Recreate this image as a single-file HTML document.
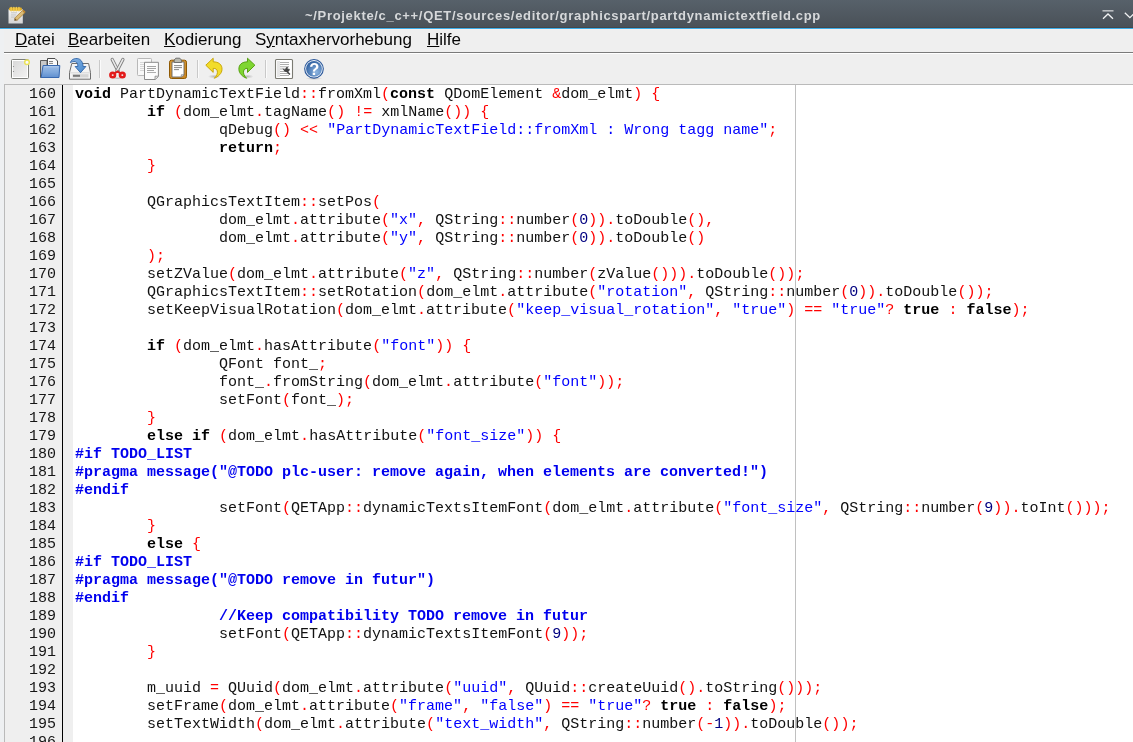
<!DOCTYPE html>
<html><head><meta charset="utf-8">
<style>
*{margin:0;padding:0;box-sizing:border-box}
body{will-change:transform}
html,body{width:1133px;height:742px;overflow:hidden;background:#efefef;font-family:"Liberation Sans",sans-serif}
#title{position:absolute;left:0;top:0;width:1133px;height:28px;background:linear-gradient(#57616a,#4a5158 96%,#45474b 96%);}
#title .t{position:absolute;left:305px;top:8px;font-weight:bold;font-size:13px;letter-spacing:0.68px;color:#d6d8da;white-space:nowrap}
#bl{position:absolute;left:0;top:28px;width:1133px;height:1px;background:#3daee9}
#bl2{position:absolute;left:0;top:29px;width:1133px;height:1px;background:#f6f1ef}
#menu{position:absolute;left:0;top:29px;width:1133px;height:24px;font-size:17px;color:#050505}
#menu span{position:absolute;top:1px;white-space:nowrap}
#menu u{text-decoration:underline;text-decoration-thickness:1px;text-underline-offset:1px}
#msep{position:absolute;left:4px;top:52px;width:1129px;height:1px;background:#7a7a7a}
#msep2{position:absolute;left:4px;top:53px;width:1129px;height:1px;background:#fff}
#tb{position:absolute;left:0;top:0;width:340px;height:84px}
#tb svg{position:absolute}
.sep{position:absolute;width:1px;height:22px;top:59px;background:#c8c8c8}
#ed{position:absolute;left:4px;top:84px;width:1129px;height:658px;border-left:1px solid #bababa;border-top:1px solid #bababa;background:#fff;overflow:hidden}
#gut{position:absolute;left:0;top:0;width:68px;height:100%;background:#efefef}
#gline{position:absolute;left:57px;top:0;width:1px;height:100%;background:#000}
#margin{position:absolute;left:790px;top:0;width:1px;height:100%;background:#c0c0c0;z-index:2}
pre{font-family:"Liberation Mono",monospace;font-size:15px;line-height:18px;tab-size:8;-moz-tab-size:8}
#nums{position:absolute;left:-1px;top:1px;width:52px;text-align:right;color:#151515}
#code{position:absolute;left:70px;top:1px;color:#111}
.k{font-weight:bold;color:#000}
.o{color:#ff0000}
.s{color:#0000ff}
.n{color:#000080}
.p{font-weight:bold;color:#0000ee}
.c{font-weight:bold;color:#0000ee}
</style></head><body>
<div id="title"><svg width="1133" height="28" viewBox="0 0 1133 28" style="position:absolute;left:0;top:0">
<defs>
<linearGradient id="gpap" x1="0" y1="0" x2="0" y2="1"><stop offset="0" stop-color="#f4f4f4"/><stop offset="1" stop-color="#d4d4d4"/></linearGradient>
<linearGradient id="gpen" x1="0" y1="0" x2="1" y2="0"><stop offset="0" stop-color="#a87a2a"/><stop offset="0.5" stop-color="#e8cc8a"/><stop offset="1" stop-color="#b08030"/></linearGradient>
</defs>
<rect x="8.5" y="9.3" width="14.3" height="14.2" fill="url(#gpap)"/>
<rect x="11" y="12.5" width="6" height="0.7" fill="#b8b8b8"/><rect x="11" y="14.6" width="5" height="0.7" fill="#b8b8b8"/><rect x="11" y="16.7" width="4" height="0.7" fill="#b8b8b8"/>
<rect x="9" y="7.5" width="13" height="3.2" rx="1.4" fill="#e0ae2c"/>
<rect x="10.5" y="6.8" width="1.3" height="4.6" rx="0.6" fill="#f3cf50"/><rect x="13.2" y="6.8" width="1.3" height="4.6" rx="0.6" fill="#f3cf50"/><rect x="15.7" y="6.8" width="1.3" height="4.6" rx="0.6" fill="#f3cf50"/><rect x="18.3" y="6.8" width="1.3" height="4.6" rx="0.6" fill="#f3cf50"/>
<g transform="translate(19.6 15.6) rotate(-44)">
<rect x="-5.3" y="-1.6" width="10.8" height="3.2" fill="#dcbd78" stroke="#9c6c20" stroke-width="0.6"/>
<path d="M-5.3 -1.6 L-7.4 0 L-5.3 1.6 Z" fill="#6a4a18"/>
<rect x="5.3" y="-1.6" width="1.6" height="3.2" fill="#c88a2a"/>
</g>
<rect x="1102.5" y="10" width="11" height="1.6" fill="#b9bdc0"/>
<path d="M1103 18.8 L1108 14 L1113 18.8" fill="none" stroke="#f2f3f4" stroke-width="1.3"/>
<path d="M1124.8 12.8 L1129.9 17.6 L1135 12.8" fill="none" stroke="#f2f3f4" stroke-width="1.3"/>
</svg>
<div class="t">~/Projekte/c_c++/QET/sources/editor/graphicspart/partdynamictextfield.cpp</div></div>
<div id="bl"></div><div id="bl2"></div>
<div id="menu">
<span style="left:15px"><u>D</u>atei</span>
<span style="left:68px"><u>B</u>earbeiten</span>
<span style="left:164px"><u>K</u>odierung</span>
<span style="left:255px">S<u>y</u>ntaxhervorhebung</span>
<span style="left:427px"><u>H</u>ilfe</span>
</div>
<div style="position:absolute;left:0;top:30px;width:4px;height:712px;background:#eef0f2"></div><div id="msep"></div><div id="msep2"></div>
<div id="tb"><svg id="tbsvg" width="340" height="84" viewBox="0 0 340 84" style="position:absolute;left:0;top:0">
<defs>
<linearGradient id="gpage" x1="0" y1="0" x2="1" y2="1"><stop offset="0" stop-color="#d9d9d9"/><stop offset="1" stop-color="#f2f2f2"/></linearGradient>
<linearGradient id="gfold" x1="0" y1="0" x2="0" y2="1"><stop offset="0" stop-color="#9dbde6"/><stop offset="0.55" stop-color="#7fa8dc"/><stop offset="1" stop-color="#5f8fcf"/></linearGradient>
<linearGradient id="garrow" x1="0" y1="0" x2="1" y2="1"><stop offset="0" stop-color="#8ab4e2"/><stop offset="0.6" stop-color="#5f9ad8"/><stop offset="1" stop-color="#4a86c8"/></linearGradient>
<linearGradient id="gclip" x1="0" y1="0" x2="1" y2="1"><stop offset="0" stop-color="#d99a36"/><stop offset="1" stop-color="#c98520"/></linearGradient>
<radialGradient id="ghelp" cx="0.65" cy="0.7" r="0.7"><stop offset="0" stop-color="#8cb4e0"/><stop offset="1" stop-color="#3465a4"/></radialGradient>
<radialGradient id="gshadow" cx="0.5" cy="0.5" r="0.5"><stop offset="0" stop-color="#000" stop-opacity="0.22"/><stop offset="1" stop-color="#000" stop-opacity="0"/></radialGradient>
</defs>
<!-- separators -->
<rect x="99" y="60" width="1" height="18" fill="#c9c9c9"/><rect x="100" y="60" width="1" height="18" fill="#fbfbfb"/>
<rect x="197" y="60" width="1" height="18" fill="#c9c9c9"/><rect x="198" y="60" width="1" height="18" fill="#fbfbfb"/>
<rect x="265" y="60" width="1" height="18" fill="#c9c9c9"/><rect x="266" y="60" width="1" height="18" fill="#fbfbfb"/>
<!-- new -->
<rect x="11.5" y="59.5" width="17" height="19" rx="1" fill="#fff" stroke="#7e807c" stroke-width="1"/>
<rect x="13" y="61" width="14" height="16" fill="url(#gpage)"/>
<circle cx="13.5" cy="66.5" r="0.6" fill="#888"/><circle cx="13.5" cy="71.5" r="0.6" fill="#888"/>
<circle cx="27" cy="62.2" r="2.3" fill="#fafaff" stroke="#ece45a" stroke-width="1.5"/>
<!-- open -->
<path d="M40.5 60.5 H47 V77.5 H40.5 Z" fill="#c8c8c8" stroke="#5c5c5c" stroke-width="1"/>
<path d="M47.5 58.5 H55 L57.5 61 V66 H47.5 Z" fill="#fafafa" stroke="#4a4a4a" stroke-width="1"/>
<rect x="49" y="61" width="4" height="0.9" fill="#777"/><rect x="49" y="62.9" width="4" height="0.9" fill="#777"/>
<path d="M43 65.5 H59.8 L59 77.5 H41.2 Z" fill="url(#gfold)" stroke="#3768b0" stroke-width="1"/>
<path d="M44 66.8 H58.5" stroke="#b9d0ef" stroke-width="0.8"/>
<!-- save -->
<path d="M71.8 63.5 H88.6 L90.5 72.5 V79.2 H69.5 V72.5 Z" fill="#f4f4f4" stroke="#6e6e6e" stroke-width="1"/>
<path d="M70 72.8 H90" stroke="#cfcfcf" stroke-width="0.8"/>
<rect x="72.5" y="74.2" width="16" height="3.3" fill="#d5d5d5"/>
<rect x="73" y="74.8" width="7" height="2" fill="#7a7a7a"/>
<path d="M70.4 62.6 C71.2 58.8 76.8 57.4 79.8 59.4 C82 60.9 83 63.3 83.1 66.5 H85.9 L80.5 72.7 L75.1 66.5 H77.9 C77.9 64 77 62 75.2 61.6 C73.6 61.3 71.8 61.9 70.4 62.6 Z" fill="url(#garrow)" stroke="#2f64a8" stroke-width="0.9" stroke-linejoin="round"/>
<!-- cut -->
<ellipse cx="117.5" cy="78.3" rx="5.5" ry="1.3" fill="url(#gshadow)"/>
<path d="M112.2 59.4 L118.2 71.2" stroke="#7c7c7c" stroke-width="3.3" stroke-linecap="round"/>
<path d="M112.2 59.4 L118.2 71.2" stroke="#e9e9e9" stroke-width="1.6" stroke-linecap="round"/>
<path d="M122.9 59.4 L116.8 71.2" stroke="#7c7c7c" stroke-width="3.3" stroke-linecap="round"/>
<path d="M122.9 59.4 L116.8 71.2" stroke="#e9e9e9" stroke-width="1.6" stroke-linecap="round"/>
<path d="M114.3 72.6 L117.5 70.3 L120.7 72.6 L119 73.6 L117.5 72.8 L116 73.6 Z" fill="#e01b1b"/>
<ellipse cx="112.7" cy="75.1" rx="2.3" ry="2.2" fill="#f0f0f0" stroke="#e31b1b" stroke-width="2.6"/>
<ellipse cx="122.3" cy="75.1" rx="2.3" ry="2.2" fill="#f0f0f0" stroke="#e31b1b" stroke-width="2.6"/>
<!-- copy -->
<rect x="137.5" y="58.5" width="14" height="17" rx="0.8" fill="#f8f8f8" stroke="#b8b8b8" stroke-width="1"/>
<rect x="140" y="62.2" width="5" height="0.8" fill="#cfcfcf"/><rect x="140" y="64.2" width="5" height="0.8" fill="#cfcfcf"/><rect x="140" y="66.2" width="5" height="0.8" fill="#cfcfcf"/><rect x="140" y="68.2" width="5" height="0.8" fill="#cfcfcf"/><rect x="140" y="70.2" width="5" height="0.8" fill="#cfcfcf"/>
<path d="M144.5 62.3 H158.4 V76.5 L155.3 79.5 H144.5 Z" fill="#fcfcfc" stroke="#8a8a8a" stroke-width="1"/>
<path d="M158.2 76.2 H155 V79.4" fill="#ddd" stroke="#8a8a8a" stroke-width="0.8"/>
<rect x="147" y="66.1" width="9" height="0.9" fill="#9a9a9a"/><rect x="147" y="68.1" width="9" height="0.9" fill="#9a9a9a"/><rect x="147" y="70.1" width="7" height="0.9" fill="#9a9a9a"/><rect x="147" y="72.1" width="9" height="0.9" fill="#a5a5a5"/>
<!-- paste -->
<rect x="169.5" y="60.2" width="17" height="18.3" rx="2" fill="url(#gclip)" stroke="#8f5902" stroke-width="1"/>
<path d="M172 62 H184 V75 L181.5 77 H172 Z" fill="#fff" stroke="#6a6a6a" stroke-width="0.9"/>
<path d="M184 74.8 H181.3 V77" fill="#ddd" stroke="#777" stroke-width="0.7"/>
<rect x="174" y="65.2" width="8" height="0.9" fill="#7a7a7a"/><rect x="174" y="67.2" width="8" height="0.9" fill="#7a7a7a"/><rect x="174" y="69.2" width="5" height="0.9" fill="#7a7a7a"/>
<path d="M174.2 62.5 V60 L175.8 58.2 H179.8 L181.4 60 V62.5 Z" fill="#b9b9b0" stroke="#666" stroke-width="0.9"/>
<!-- undo -->
<ellipse cx="214" cy="76.5" rx="6" ry="2" fill="url(#gshadow)"/>
<path d="M205.8 65.2 L213.2 58.2 V61.8 C218.5 61.8 222.3 64.5 222 69.5 C221.8 73.5 218.5 76.5 214.3 78.3 C216.8 75.5 217.8 73.4 217.3 71 C216.9 69.2 215.5 68.3 213.2 68.4 V72.4 Z" fill="#f2dc2a" stroke="#c4a000" stroke-width="0.9" stroke-linejoin="round"/>
<!-- redo -->
<ellipse cx="247.5" cy="76.5" rx="6" ry="2" fill="url(#gshadow)"/>
<path d="M254.9 65.2 L247.5 58.2 V61.8 C242.2 61.8 238.6 64.5 238.9 69.5 C239.1 73.5 242.4 76.5 246.6 78.3 C244.1 75.5 243.1 73.4 243.6 71 C244 69.2 245.4 68.3 247.5 68.4 V72.4 Z" fill="#7fd631" stroke="#4e9a06" stroke-width="0.9" stroke-linejoin="round"/>
<!-- prefs -->
<rect x="275.5" y="59.5" width="17" height="19" rx="1" fill="#fff" stroke="#7a7a72" stroke-width="1.1"/>
<rect x="277" y="61" width="3" height="16" fill="#e6e6e6"/>
<rect x="280" y="62" width="9" height="0.8" fill="#9a9a9a"/><rect x="280" y="64.2" width="9" height="0.8" fill="#9a9a9a"/><rect x="280" y="66.4" width="9" height="0.8" fill="#9a9a9a"/><rect x="280" y="68.6" width="9" height="0.8" fill="#9a9a9a"/><rect x="280" y="71" width="9" height="0.8" fill="#9a9a9a"/><rect x="280" y="73.2" width="9" height="0.8" fill="#9a9a9a"/><rect x="280" y="75.2" width="9" height="0.8" fill="#9a9a9a"/>
<path d="M282.5 68.3 L285 69.6 L286.2 67.2 L288.3 66.7 L287.3 68.3 L288.6 69.3 L289.8 68.8 L289.4 70.7 L288 71.4 L290.5 74 L289.3 75 L286.8 72.3 L284.6 71.6 L283.3 69.8 Z" fill="#444"/>
<!-- help -->
<ellipse cx="314" cy="78.6" rx="8.5" ry="1.4" fill="url(#gshadow)"/>
<circle cx="314" cy="68.85" r="9.85" fill="#2a579a"/>
<circle cx="314" cy="68.85" r="8.75" fill="#f4f7fb"/>
<circle cx="314" cy="68.85" r="7.9" fill="url(#ghelp)"/>
<text x="314.2" y="74.8" text-anchor="middle" font-family="Liberation Sans" font-weight="bold" font-size="16.5" fill="#fff">?</text>
<!-- title icon -->
</svg>
</div>
<div id="ed">
<div id="gut"></div><div id="gline"></div><div id="margin"></div>
<pre id="nums">160
161
162
163
164
165
166
167
168
169
170
171
172
173
174
175
176
177
178
179
180
181
182
183
184
185
186
187
188
189
190
191
192
193
194
195
196</pre>
<pre id="code"><span class="k">void</span> PartDynamicTextField<span class="o">:</span><span class="o">:</span>fromXml<span class="o">(</span><span class="k">const</span> QDomElement <span class="o">&amp;</span>dom_elmt<span class="o">)</span> <span class="o">{</span>
	<span class="k">if</span> <span class="o">(</span>dom_elmt<span class="o">.</span>tagName<span class="o">(</span><span class="o">)</span> <span class="o">!</span><span class="o">=</span> xmlName<span class="o">(</span><span class="o">)</span><span class="o">)</span> <span class="o">{</span>
		qDebug<span class="o">(</span><span class="o">)</span> <span class="o">&lt;</span><span class="o">&lt;</span> <span class="s">&quot;PartDynamicTextField::fromXml : Wrong tagg name&quot;</span><span class="o">;</span>
		<span class="k">return</span><span class="o">;</span>
	<span class="o">}</span>

	QGraphicsTextItem<span class="o">:</span><span class="o">:</span>setPos<span class="o">(</span>
		dom_elmt<span class="o">.</span>attribute<span class="o">(</span><span class="s">&quot;x&quot;</span><span class="o">,</span> QString<span class="o">:</span><span class="o">:</span>number<span class="o">(</span><span class="n">0</span><span class="o">)</span><span class="o">)</span><span class="o">.</span>toDouble<span class="o">(</span><span class="o">)</span><span class="o">,</span>
		dom_elmt<span class="o">.</span>attribute<span class="o">(</span><span class="s">&quot;y&quot;</span><span class="o">,</span> QString<span class="o">:</span><span class="o">:</span>number<span class="o">(</span><span class="n">0</span><span class="o">)</span><span class="o">)</span><span class="o">.</span>toDouble<span class="o">(</span><span class="o">)</span>
	<span class="o">)</span><span class="o">;</span>
	setZValue<span class="o">(</span>dom_elmt<span class="o">.</span>attribute<span class="o">(</span><span class="s">&quot;z&quot;</span><span class="o">,</span> QString<span class="o">:</span><span class="o">:</span>number<span class="o">(</span>zValue<span class="o">(</span><span class="o">)</span><span class="o">)</span><span class="o">)</span><span class="o">.</span>toDouble<span class="o">(</span><span class="o">)</span><span class="o">)</span><span class="o">;</span>
	QGraphicsTextItem<span class="o">:</span><span class="o">:</span>setRotation<span class="o">(</span>dom_elmt<span class="o">.</span>attribute<span class="o">(</span><span class="s">&quot;rotation&quot;</span><span class="o">,</span> QString<span class="o">:</span><span class="o">:</span>number<span class="o">(</span><span class="n">0</span><span class="o">)</span><span class="o">)</span><span class="o">.</span>toDouble<span class="o">(</span><span class="o">)</span><span class="o">)</span><span class="o">;</span>
	setKeepVisualRotation<span class="o">(</span>dom_elmt<span class="o">.</span>attribute<span class="o">(</span><span class="s">&quot;keep_visual_rotation&quot;</span><span class="o">,</span> <span class="s">&quot;true&quot;</span><span class="o">)</span> <span class="o">=</span><span class="o">=</span> <span class="s">&quot;true&quot;</span><span class="o">?</span> <span class="k">true</span> <span class="o">:</span> <span class="k">false</span><span class="o">)</span><span class="o">;</span>

	<span class="k">if</span> <span class="o">(</span>dom_elmt<span class="o">.</span>hasAttribute<span class="o">(</span><span class="s">&quot;font&quot;</span><span class="o">)</span><span class="o">)</span> <span class="o">{</span>
		QFont font_<span class="o">;</span>
		font_<span class="o">.</span>fromString<span class="o">(</span>dom_elmt<span class="o">.</span>attribute<span class="o">(</span><span class="s">&quot;font&quot;</span><span class="o">)</span><span class="o">)</span><span class="o">;</span>
		setFont<span class="o">(</span>font_<span class="o">)</span><span class="o">;</span>
	<span class="o">}</span>
	<span class="k">else</span> <span class="k">if</span> <span class="o">(</span>dom_elmt<span class="o">.</span>hasAttribute<span class="o">(</span><span class="s">&quot;font_size&quot;</span><span class="o">)</span><span class="o">)</span> <span class="o">{</span>
<span class="p">#if TODO_LIST</span>
<span class="p">#pragma message(&quot;@TODO plc-user: remove again, when elements are converted!&quot;)</span>
<span class="p">#endif</span>
		setFont<span class="o">(</span>QETApp<span class="o">:</span><span class="o">:</span>dynamicTextsItemFont<span class="o">(</span>dom_elmt<span class="o">.</span>attribute<span class="o">(</span><span class="s">&quot;font_size&quot;</span><span class="o">,</span> QString<span class="o">:</span><span class="o">:</span>number<span class="o">(</span><span class="n">9</span><span class="o">)</span><span class="o">)</span><span class="o">.</span>toInt<span class="o">(</span><span class="o">)</span><span class="o">)</span><span class="o">)</span><span class="o">;</span>
	<span class="o">}</span>
	<span class="k">else</span> <span class="o">{</span>
<span class="p">#if TODO_LIST</span>
<span class="p">#pragma message(&quot;@TODO remove in futur&quot;)</span>
<span class="p">#endif</span>
		<span class="c">//Keep compatibility TODO remove in futur</span>
		setFont<span class="o">(</span>QETApp<span class="o">:</span><span class="o">:</span>dynamicTextsItemFont<span class="o">(</span><span class="n">9</span><span class="o">)</span><span class="o">)</span><span class="o">;</span>
	<span class="o">}</span>

	m_uuid <span class="o">=</span> QUuid<span class="o">(</span>dom_elmt<span class="o">.</span>attribute<span class="o">(</span><span class="s">&quot;uuid&quot;</span><span class="o">,</span> QUuid<span class="o">:</span><span class="o">:</span>createUuid<span class="o">(</span><span class="o">)</span><span class="o">.</span>toString<span class="o">(</span><span class="o">)</span><span class="o">)</span><span class="o">)</span><span class="o">;</span>
	setFrame<span class="o">(</span>dom_elmt<span class="o">.</span>attribute<span class="o">(</span><span class="s">&quot;frame&quot;</span><span class="o">,</span> <span class="s">&quot;false&quot;</span><span class="o">)</span> <span class="o">=</span><span class="o">=</span> <span class="s">&quot;true&quot;</span><span class="o">?</span> <span class="k">true</span> <span class="o">:</span> <span class="k">false</span><span class="o">)</span><span class="o">;</span>
	setTextWidth<span class="o">(</span>dom_elmt<span class="o">.</span>attribute<span class="o">(</span><span class="s">&quot;text_width&quot;</span><span class="o">,</span> QString<span class="o">:</span><span class="o">:</span>number<span class="o">(</span><span class="o">-</span><span class="n">1</span><span class="o">)</span><span class="o">)</span><span class="o">.</span>toDouble<span class="o">(</span><span class="o">)</span><span class="o">)</span><span class="o">;</span>
</pre>
</div>
</body></html>
